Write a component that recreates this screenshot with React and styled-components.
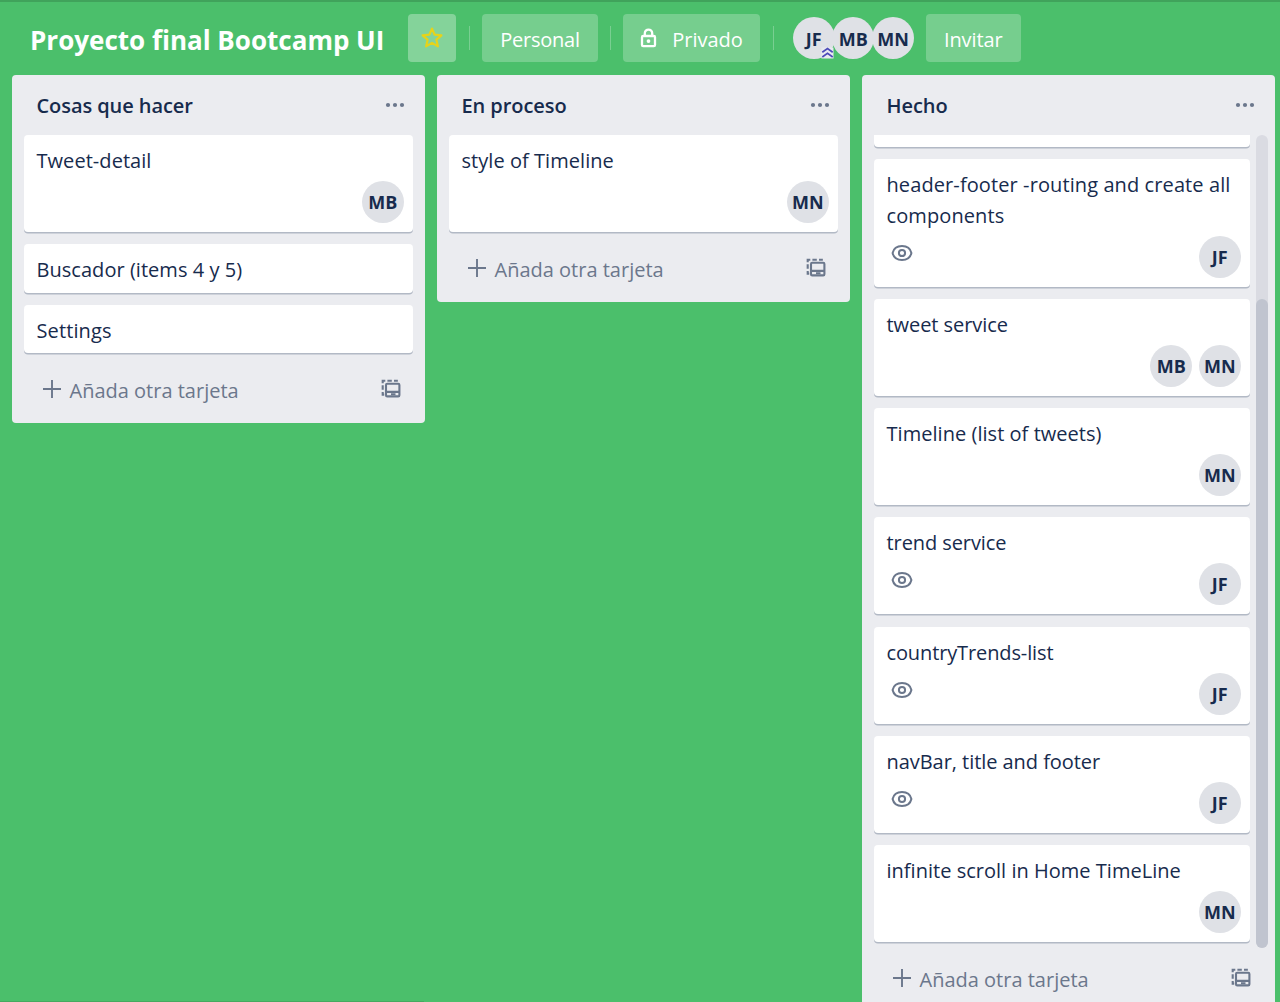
import React from "react";
import styled, { createGlobalStyle } from "styled-components";

const Global = createGlobalStyle`
  * { box-sizing: border-box; }
  body { margin: 0; background: #4bbf6b; overflow: hidden; font-family: "Open Sans", "Noto Sans", sans-serif; color: #172b4d; }
`;

const Page = styled.div`
  position: relative;
  height: 1002px;
  display: flex;
  flex-direction: column;
  border-top: 2px solid #40a35b;
  overflow: hidden;
`;

const Header = styled.header`
  display: flex;
  align-items: center;
  height: 72px;
  flex: none;
  padding: 0 0 0 30px;
`;

const Title = styled.h1`
  width: 378px;
  margin: 0;
  padding-top: 3px;
  font-size: 26px;
  line-height: 48px;
  font-weight: 700;
  color: #fff;
  white-space: nowrap;
`;

const HeaderButton = styled.button`
  display: flex;
  align-items: center;
  justify-content: center;
  gap: ${(p) => p.$gap || 0}px;
  width: ${(p) => p.$w}px;
  height: 48px;
  flex: none;
  padding: 0;
  border: 0;
  border-radius: 4px;
  background: rgba(255, 255, 255, ${(p) => (p.$bright ? 0.32 : 0.24)});
  color: #fff;
  font: 400 20px/44px "Open Sans", sans-serif;
  letter-spacing: ${(p) => p.$track || 0}px;
  white-space: nowrap;
`;

const ButtonText = styled.span`
  padding-top: 4px;
`;

const Divider = styled.span`
  width: 1px;
  height: 24px;
  flex: none;
  margin: 0 ${(p) => p.$right || 12}px 0 ${(p) => p.$left || 12}px;
  background: rgba(255, 255, 255, 0.26);
`;

const Avatar = styled.span`
  position: relative;
  display: flex;
  align-items: center;
  justify-content: center;
  width: 42px;
  height: 42px;
  flex: none;
  padding-left: 0.5px;
  border-radius: 50%;
  background: #dfe1e6;
  font-size: 18px;
  line-height: 24px;
  font-weight: 700;
`;

const Members = styled.div`
  display: flex;
  margin-right: 12px;
  > * { padding-top: 1px; }
  > * + * { margin-left: -2.4px; }
`;

const Admin = styled.svg`
  position: absolute;
  right: 1px;
  bottom: 0;
  z-index: 1;
`;

const Board = styled.main`
  display: flex;
  align-items: flex-start;
  gap: 12px;
  padding: 1px 6px 0 12px;
  flex: 1;
  min-height: 0;
`;

const Column = styled.section`
  width: 413px;
  flex: none;
  border-radius: 4px;
  background: #ebecf0;
`;

const ColumnHead = styled.div`
  display: flex;
  align-items: center;
  justify-content: space-between;
  height: 60px;
  padding: 0 20.5px 0 24.5px;
`;

const ColumnTitle = styled.h2`
  margin: 0;
  padding-top: 2px;
  font-size: 20px;
  font-weight: 600;
  line-height: 30px;
  letter-spacing: -0.07px;
`;

const ListArea = styled.div`
  display: flex;
  align-items: flex-start;
  gap: 6px;
  height: ${(p) => (p.$scroll ? "808px" : "auto")};
  padding: 0 ${(p) => (p.$scroll ? 7 : 12)}px 0 12px;
`;

const Cards = styled.div`
  display: flex;
  flex-direction: column;
  justify-content: flex-end;
  gap: 12.13px;
  flex: 1;
  padding-bottom: 1px;
  height: ${(p) => (p.$scroll ? "100%" : "auto")};
  clip-path: inset(0 0 -4px 0);
`;

const Card = styled.article`
  display: flex;
  flex-direction: column;
  justify-content: space-between;
  flex: none;
  height: ${(p) => p.$h}px;
  padding: 11px 9.5px 9px 12.5px;
  border-radius: 4px;
  background: #fff;
  box-shadow: 0 1.5px 0 rgba(9, 30, 66, 0.25);
`;

const CardText = styled.div`
  font-size: 20px;
  line-height: 30.3px;
  letter-spacing: ${(p) => p.$track || 0}px;
`;

const CardFoot = styled.div`
  display: flex;
  justify-content: space-between;
  height: 42px;
  margin-top: -6px;
  padding-left: 4px;
`;

const CardMembers = styled.div`
  display: flex;
  gap: 6.5px;
  margin-left: auto;
`;

const AddRow = styled.div`
  display: flex;
  align-items: center;
  height: 69px;
  padding: 1px 24px 0 29.5px;
  color: #6b778c;
`;

const AddText = styled.span`
  flex: 1;
  margin-left: 8px;
  padding-top: 3px;
  font-size: 20px;
`;

const Track = styled.div`
  width: 12px;
  height: 813px;
  flex: none;
  padding-top: 164px;
  border-radius: 6px;
  background: #dadbe2;
`;

const Thumb = styled.div`
  height: 649px;
  border-radius: 6px;
  background: #c0c4cf;
`;

const BoardScroll = styled.div`
  position: absolute;
  left: 0;
  bottom: 0;
  width: 424px;
  height: 1px;
  background: #44aa60;
`;

const EyeIcon = styled.svg`
  flex: none;
  margin-top: 8px;
`;

const Star = () => (
  <svg width="24" height="24" viewBox="0 0 24 24" fill="none" stroke="#e6d31a" strokeWidth="2.2" strokeLinejoin="round">
    <path d="M12 2.6 14.7 8.7 21.4 9.3 16.4 13.7 17.9 20.4 12 16.9 6.1 20.4 7.6 13.7 2.6 9.3 9.3 8.7Z" />
  </svg>
);

const Lock = () => (
  <svg width="18" height="22" viewBox="0 0 18 22" fill="none" stroke="#fff" strokeWidth="2.3">
    <rect x="2" y="9" width="13" height="10.2" rx="1.2" />
    <path d="M4.800 8.500V6.300a3.700 3.700 0 0 1 7.400 0V8.500" />
    <circle cx="8.500" cy="14.100" r="1.900" fill="#fff" stroke="none" />
  </svg>
);

const Dots = () => (
  <svg width="20" height="6" viewBox="0 0 20 6" fill="#6b778c">
    <circle cx="3" cy="3" r="2.1" />
    <circle cx="10" cy="3" r="2.1" />
    <circle cx="17" cy="3" r="2.1" />
  </svg>
);

const Eye = () => (
  <EyeIcon width="22" height="18" viewBox="0 0 22 18" fill="none" stroke="#6b778c" strokeWidth="2">
    <path d="M1.600 9C2.600 4.600 6.400 2 11 2s8.400 2.600 9.400 7c-1 4.400-4.800 7-9.400 7S2.600 13.400 1.600 9Z" />
    <circle cx="11" cy="9" r="3.100" />
  </EyeIcon>
);

const Plus = () => (
  <svg width="20" height="20" viewBox="0 0 20 20" stroke="#6b778c" strokeWidth="1.900">
    <path d="M1 10h18M10 1v18" />
  </svg>
);

const Template = () => (
  <svg width="20" height="20" viewBox="0 0 20 20" fill="none" stroke="#6b778c" strokeWidth="2.100">
    <path d="M1.700 4.200V1.700h2.600M6.400 1.700h4.400M13 1.700h2.800v1M1.700 6.300v4.400M1.700 12.900v2.700h1.500" />
    <rect x="5" y="4.800" width="13.400" height="12.600" rx="1.200" />
    <path d="M5 12.900h13.400M10 15.300h4.500" />
  </svg>
);

const AdminBadge = () => (
  <Admin width="13" height="13" viewBox="0 0 13 13" fill="none">
    <path d="M0.500 1.500h12v11h-12z" fill="#e8e9f0" />
    <path d="M1.300 6.200 6.500 2.600l5.200 3.600M1.300 11 6.500 7.400l5.200 3.600" stroke="#4c4ab8" strokeWidth="1.700" />
  </Admin>
);

const COLUMNS = [
  {
    title: "Cosas que hacer",
    cards: [
      { text: "Tweet-detail", track: 0.05, members: ["MB"] },
      { text: "Buscador (items 4 y 5)", track: 0.04 },
      { text: "Settings", track: 0.12 },
    ],
  },
  { title: "En proceso", cards: [{ text: "style of Timeline", track: 0.05, members: ["MN"] }] },
  {
    title: "Hecho",
    scroll: true,
    cards: [
      { text: "", members: [] },
      { text: "header-footer -routing and create all components", track: 0.1, members: ["JF"], watch: true, tall: true },
      { text: "tweet service", track: -0.06, members: ["MB", "MN"] },
      { text: "Timeline (list of tweets)", track: 0.04, members: ["MN"] },
      { text: "trend service", track: -0.08, members: ["JF"], watch: true },
      { text: "countryTrends-list", track: -0.12, members: ["JF"], watch: true },
      { text: "navBar, title and footer", track: -0.05, members: ["JF"], watch: true },
      { text: "infinite scroll in Home TimeLine", track: 0.02, members: ["MN"] },
    ],
  },
];

const cardHeight = (card) => (card.tall ? 127.4 : card.members ? 97.07 : 48.53);

export default function App() {
  return (
    <>
      <Global />
      <Page>
        <Header>
          <Title>Proyecto final Bootcamp UI</Title>
          <HeaderButton $w={48} $bright aria-label="Favorito"><Star /></HeaderButton>
          <Divider $left={13} />
          <HeaderButton $w={116} $track={-0.25}><ButtonText>Personal</ButtonText></HeaderButton>
          <Divider />
          <HeaderButton $w={137} $gap={14}><Lock /><ButtonText>Privado</ButtonText></HeaderButton>
          <Divider $left={13} $right={18.5} />
          <Members>
            <Avatar>JF<AdminBadge /></Avatar>
            <Avatar>MB</Avatar>
            <Avatar>MN</Avatar>
          </Members>
          <HeaderButton $w={95} $track={-0.1}><ButtonText>Invitar</ButtonText></HeaderButton>
        </Header>
        <Board>
          {COLUMNS.map((col) => (
            <Column key={col.title}>
              <ColumnHead>
                <ColumnTitle>{col.title}</ColumnTitle>
                <Dots />
              </ColumnHead>
              <ListArea $scroll={col.scroll}>
                <Cards $scroll={col.scroll}>
                  {col.cards.map((card, i) => (
                    <Card key={i} $h={cardHeight(card)}>
                      <CardText $track={card.track}>{card.text}</CardText>
                      {card.members && (
                        <CardFoot>
                          {card.watch && <Eye />}
                          <CardMembers>
                            {card.members.map((name) => <Avatar key={name}>{name}</Avatar>)}
                          </CardMembers>
                        </CardFoot>
                      )}
                    </Card>
                  ))}
                </Cards>
                {col.scroll && <Track><Thumb /></Track>}
              </ListArea>
              <AddRow>
                <Plus />
                <AddText>Añada otra tarjeta</AddText>
                <Template />
              </AddRow>
            </Column>
          ))}
        </Board>
        <BoardScroll />
      </Page>
    </>
  );
}
